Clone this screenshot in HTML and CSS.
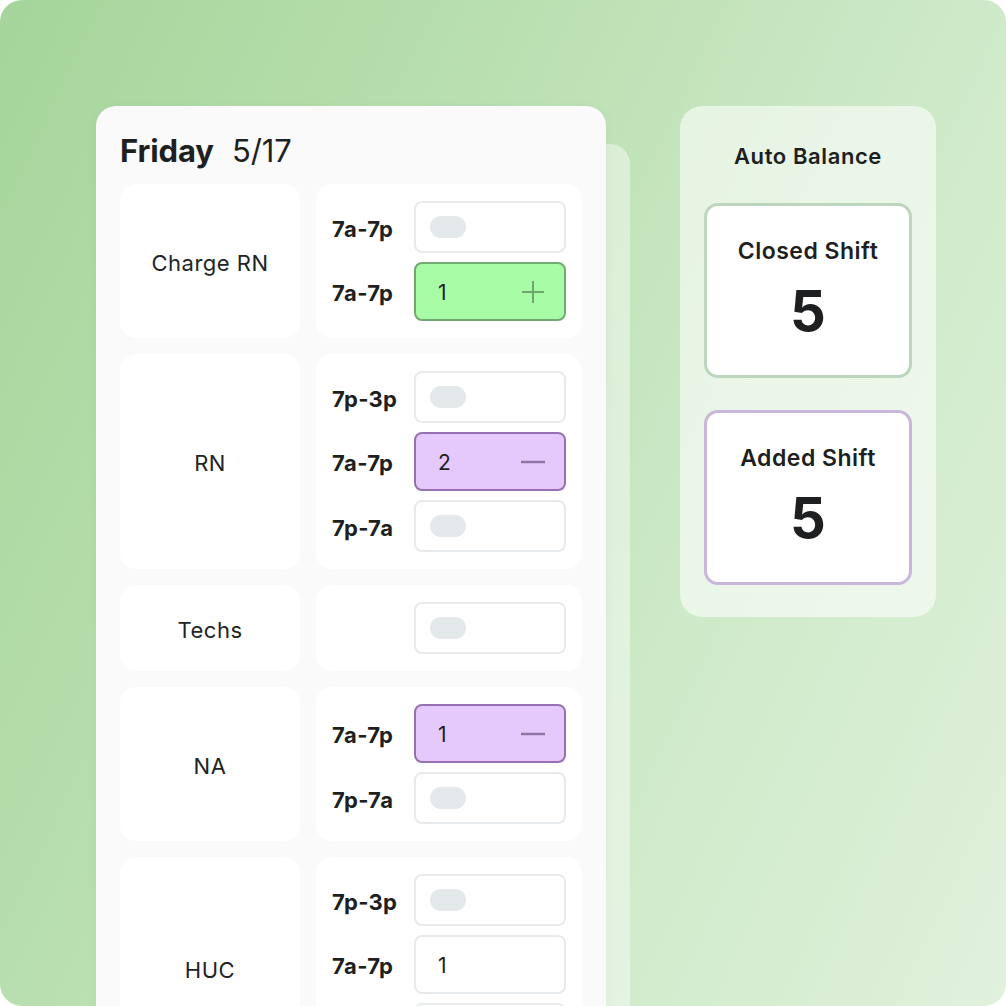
FILE: index.html
```html
<!DOCTYPE html>
<html>
<head>
<meta charset="utf-8">
<link rel="stylesheet" href="styles.css">
</head>
<body>
<div class="canvas">
  <div class="stack">
    <div class="day-card">
      <div class="day-head"><span class="day-name">Friday</span><span class="day-date">5/17</span></div>
      <div class="grid">
        <div class="role">Charge RN</div>
        <div class="shifts">
          <div class="shift"><span class="time">7a-7p</span><div class="slot"><span class="pill"></span></div></div>
          <div class="shift"><span class="time">7a-7p</span><div class="slot filled green"><span class="val">1</span>
            <svg class="ico" width="26" height="26" viewBox="0 0 26 26"><path d="M13 2v22M2 13h22" stroke="#6ea66c" stroke-width="2" fill="none"/></svg></div></div>
        </div>

        <div class="role">RN</div>
        <div class="shifts">
          <div class="shift"><span class="time">7p-3p</span><div class="slot"><span class="pill"></span></div></div>
          <div class="shift"><span class="time">7a-7p</span><div class="slot filled purple"><span class="val">2</span>
            <svg class="ico" width="26" height="26" viewBox="0 0 26 26"><path d="M1 13h24" stroke="#9072a8" stroke-width="2.5" fill="none"/></svg></div></div>
          <div class="shift"><span class="time">7p-7a</span><div class="slot"><span class="pill"></span></div></div>
        </div>

        <div class="role">Techs</div>
        <div class="shifts">
          <div class="shift"><span class="time"></span><div class="slot"><span class="pill"></span></div></div>
        </div>

        <div class="role">NA</div>
        <div class="shifts">
          <div class="shift"><span class="time">7a-7p</span><div class="slot filled purple"><span class="val">1</span>
            <svg class="ico" width="26" height="26" viewBox="0 0 26 26"><path d="M1 13h24" stroke="#9072a8" stroke-width="2.5" fill="none"/></svg></div></div>
          <div class="shift"><span class="time">7p-7a</span><div class="slot"><span class="pill"></span></div></div>
        </div>

        <div class="role">HUC</div>
        <div class="shifts">
          <div class="shift"><span class="time">7p-3p</span><div class="slot"><span class="pill"></span></div></div>
          <div class="shift"><span class="time">7a-7p</span><div class="slot filled"><span class="val">1</span></div></div>
          <div class="shift"><span class="time"></span><div class="slot filled"></div></div>
        </div>
      </div>
    </div>
  </div>

  <div class="balance">
    <div class="bal-title">Auto Balance</div>
    <div class="stat closed">
      <div class="stat-label">Closed Shift</div>
      <div class="stat-num">5</div>
    </div>
    <div class="stat added">
      <div class="stat-label">Added Shift</div>
      <div class="stat-num">5</div>
    </div>
  </div>
</div>
</body>
</html>
```

FILE: styles.css
```css
* { box-sizing: border-box; }
html, body { margin: 0; padding: 0; background: #ffffff; }
body { font-family: Inter, "Noto Sans", "Liberation Sans", sans-serif; color: #1e1f21; }

.canvas {
  width: 1006px;
  height: 1006px;
  border-radius: 22px;
  overflow: hidden;
  background: linear-gradient(115deg, #a5d59a 0%, #b9dfb0 35%, #cde9c7 65%, #e0f1dc 100%);
  display: flex;
  align-items: flex-start;
  padding: 106px 0 0 96px;
  gap: 74px;
}

.stack {
  position: relative;
  width: 510px;
  flex: none;
}
.stack::before {
  content: "";
  position: absolute;
  top: 38px;
  left: 24px;
  right: -24px;
  height: 1200px;
  border-radius: 20px;
  background: rgba(255, 255, 255, 0.42);
}

.day-card {
  position: relative;
  background: #fafafa;
  border-radius: 20px;
  padding: 24px 24px 40px 24px;
  box-shadow: 0 2px 10px rgba(60, 100, 60, 0.06);
}

.day-head {
  height: 40px;
  display: flex;
  align-items: center;
  gap: 18px;
  margin-bottom: 14px;
  font-size: 31px;
  letter-spacing: -0.1px;
}
.day-name { font-weight: 700; }
.day-date { font-weight: 400; }

.grid {
  display: grid;
  grid-template-columns: 180px 266px;
  gap: 16px;
}

.role {
  background: #ffffff;
  border-radius: 16px;
  display: flex;
  align-items: center;
  justify-content: center;
  padding-top: 3px;
  font-size: 22px;
  letter-spacing: 0.5px;
  font-weight: 400;
  color: #222325;
}

.shifts {
  background: #ffffff;
  border-radius: 16px;
  padding: 17px 16px;
  display: flex;
  flex-direction: column;
  gap: 9px;
}

.shift {
  display: grid;
  grid-template-columns: 82px 152px;
  align-items: center;
}

.time {
  padding-top: 3px;
  font-size: 22px;
  font-weight: 700;
  letter-spacing: 0.3px;
  color: #1e1f21;
}

.slot {
  height: 52px;
  border: 2px solid #e6eaec;
  border-radius: 8px;
  background: #ffffff;
  display: flex;
  align-items: center;
  padding: 0 16px 0 14px;
}
.slot.filled {
  height: 59px;
  padding: 0 18px 0 22px;
  justify-content: space-between;
}
.slot.green { background: #a8fca5; border-color: #72a972; }
.slot.purple { background: #e5c9fd; border-color: #9670b2; }

.pill {
  width: 36px;
  height: 22px;
  border-radius: 11px;
  background: #e3e8eb;
}

.val {
  padding-top: 2px;
  font-size: 21px;
  font-weight: 400;
  color: #1e1f21;
}

.balance {
  width: 256px;
  flex: none;
  background: rgba(255, 255, 255, 0.58);
  border-radius: 22px;
  padding: 36px 24px 32px 24px;
  display: flex;
  flex-direction: column;
  gap: 33px;
}
.bal-title {
  height: 28px;
  line-height: 28px;
  text-align: center;
  font-size: 22px;
  letter-spacing: 0.6px;
  font-weight: 600;
  color: #1e1f21;
}
.balance .stat + .stat { margin-top: -1px; }

.stat {
  height: 175px;
  background: #ffffff;
  border: 3px solid #bcd6bd;
  border-radius: 14px;
  display: flex;
  flex-direction: column;
  align-items: center;
  padding-top: 30px;
}
.stat.added { border-color: #c9b6da; }
.stat-label {
  height: 30px;
  line-height: 30px;
  font-size: 23px;
  letter-spacing: 0.5px;
  font-weight: 600;
  color: #1e1f21;
}
.stat-num {
  margin-top: 13px;
  height: 64px;
  line-height: 64px;
  font-size: 56px;
  font-weight: 700;
  color: #1e1f21;
}
```
